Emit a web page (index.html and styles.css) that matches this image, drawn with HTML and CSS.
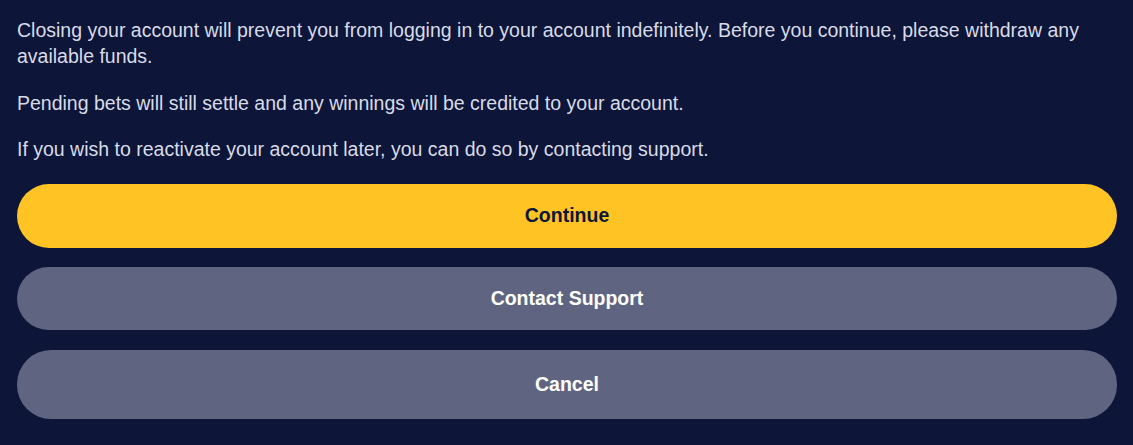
FILE: index.html
```html
<!DOCTYPE html>
<html>
<head>
	<title>Close Account</title>
	<link rel="stylesheet" href="styles.css">
</head>
<body>

<div class="close-account">
	<div class="notes">
		<p>Closing your account will prevent you from logging in to your account indefinitely. Before you continue, please withdraw any available funds.</p>
		<p>Pending bets will still settle and any winnings will be credited to your account.</p>
		<p>If you wish to reactivate your account later, you can do so by contacting support.</p>
	</div>

	<div class="actions">
		<button type="button" class="btn btn-primary">Continue</button>
		<button type="button" class="btn btn-secondary btn-support">Contact Support</button>
		<button type="button" class="btn btn-secondary btn-cancel">Cancel</button>
	</div>
</div>

</body>
</html>
```

FILE: styles.css
```css
html, body {
	margin:0;
	background-color:#0d1539;
}
body {
	font-family:"Liberation Sans", Arial, sans-serif;
	font-size:19.5px;
	color:#d8dbe7;
}

.close-account {
	padding:17px 16px 0px 17px;
}

.notes {
	padding-bottom:1px;
}
.notes p {
	margin:0px 0px 20px 0px;
	line-height:26.4px;
}

.actions {
	display:flex;
	flex-direction:column;
	gap:19px;
}

.btn {
	display:block;
	width:100%;
	height:64px;
	border:none;
	border-radius:32px;
	font-family:"Liberation Sans", Arial, sans-serif;
	font-size:19.5px;
	font-weight:bold;
	cursor:pointer;
}
.btn-primary {
	background-color:#ffc423;
	color:#0d1539;
}
.btn-secondary {
	background-color:#5f6580;
	color:#ffffff;
}
.btn-support {
	height:63px;
}
.btn-cancel {
	height:69px;
	border-radius:34px;
	margin-top:1px;
}
```
